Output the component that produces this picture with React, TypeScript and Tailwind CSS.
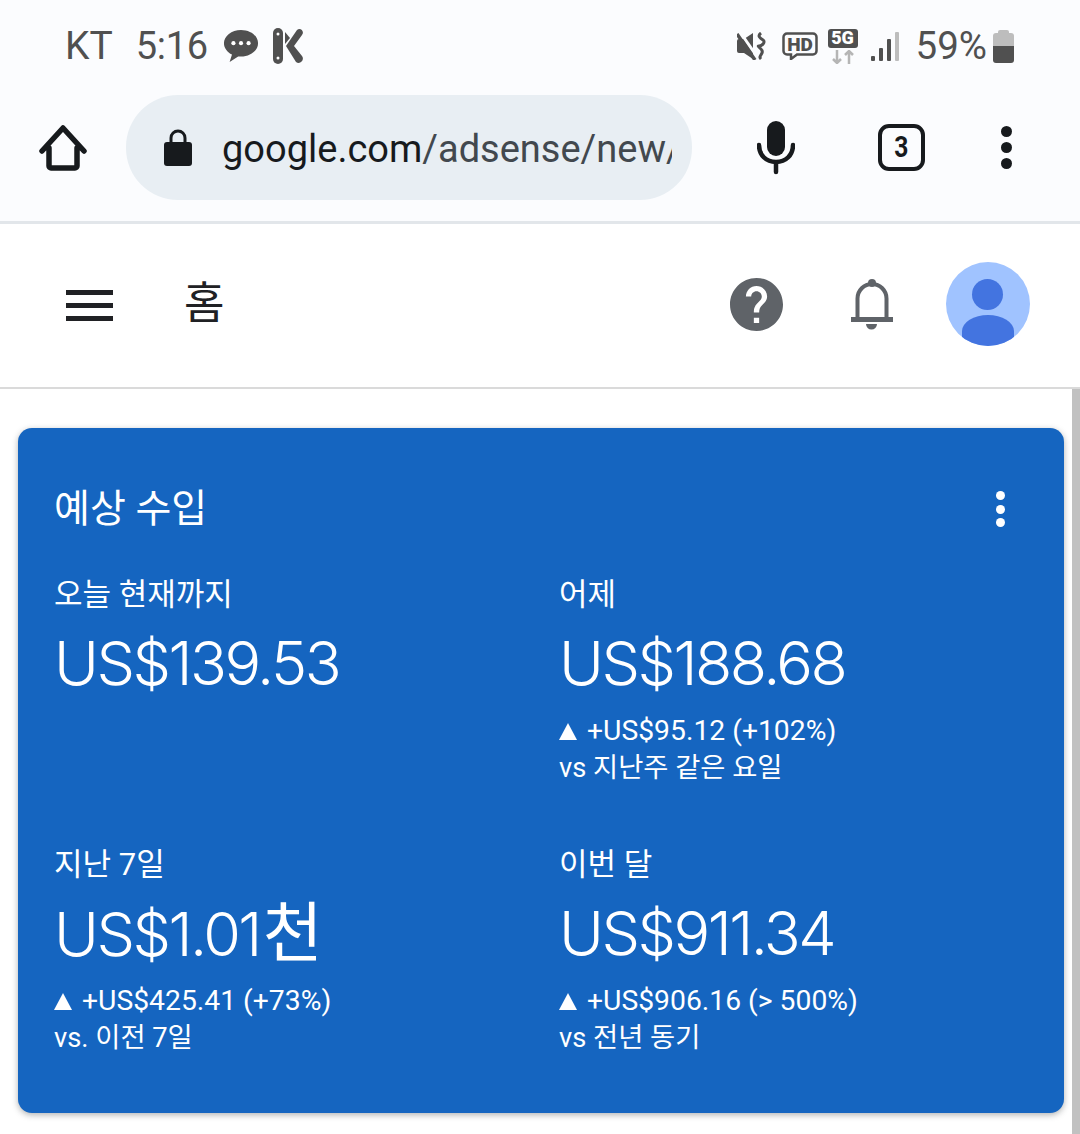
const ko = "font-['Roboto','Noto_Sans_CJK_KR',sans-serif]";

function Metric({ label, value, unit, delta, note }: { label: string; value: string; unit?: string; delta?: string; note?: string }) {
  return (
    <div className="flex flex-col">
      <div className="h-[38px] text-[31px] leading-[38px] text-white">{label}</div>
      <div className="mt-[18px] h-[62px] whitespace-nowrap font-['Inter','Noto_Sans_CJK_KR',sans-serif] text-[61px] font-[350] leading-[62px] tracking-[-2.5px] text-white">
        {value}
        {unit && <span className="ml-[3px] text-[65px] font-normal tracking-normal">{unit}</span>}
      </div>
      {delta && (
        <div className="mt-[19px] flex h-[36px] items-center text-[28.3px] leading-[36px] text-white">
          <svg width="18" height="17" viewBox="0 0 18 17" className="mr-[10px]"><path d="M9 0l9 17H0z" fill="#fff" /></svg>
          {delta}
        </div>
      )}
      {note && <div className="mt-[1px] h-[36px] text-[27.3px] leading-[36px] text-white">{note}</div>}
    </div>
  );
}

export default function App() {
  return (
    <div className={`flex h-[1134px] w-[1080px] flex-col overflow-hidden bg-white ${ko}`}>
      <div className="h-[224px] shrink-0 border-b-[3px] border-[#e2e6ea] bg-[#fbfcfe]">
        <div className="flex h-[95px] items-start justify-between pl-[65px] pr-[66px] pt-[27px]">
          <div className="flex h-[38px] items-center text-[#505050]">
            <span className="text-[39px] leading-none">KT</span>
            <span className="ml-[23px] text-[38px] leading-none tracking-[-0.3px]">5:16</span>
            <svg width="36" height="36" viewBox="0 0 38 36" className="ml-[15px]">
              <path d="M19 1C9 1 1 7.500 1 15c0 5 3.500 9.500 8.500 12L7 35l9-6c1 .1 2 .2 3 .2 10 0 18-6.300 18-14.200S29 1 19 1z" fill="#505050" />
              <circle cx="11" cy="15" r="2.200" fill="#fff" /><circle cx="19" cy="15" r="2.200" fill="#fff" /><circle cx="27" cy="15" r="2.200" fill="#fff" />
            </svg>
            <svg width="30" height="36" viewBox="0 0 30 36" className="ml-[14px]">
              <rect x="0" y="0" width="10" height="36" rx="5" fill="#505050" />
              <circle cx="5" cy="6" r="1.500" fill="#fff" /><circle cx="5" cy="30" r="1.500" fill="#fff" />
              <path d="M13 18L24 2c3-3 8 1 5 5l-8 11 8 10c3 4-2 9-6 6z" fill="#505050" />
              <path d="M12 4v12l5-6z" fill="#505050" />
            </svg>
          </div>
          <div className="flex h-[38px] items-center text-[#505050]">
            <svg width="30" height="28" viewBox="0 0 30 28">
              <path d="M0 9a2 2 0 0 1 2-2h5l9-6v26l-9-6H2a2 2 0 0 1-2-2z" fill="#505050" />
              <path d="M3 0l18 26" stroke="#fbfcfe" strokeWidth="3" />
              <path d="M0 2l18 26" stroke="#505050" strokeWidth="3.500" />
              <path d="M24 1c-4 3-1 5 2 7s-1 6-4 6 5 3 3 7-3 4-1 6" fill="none" stroke="#505050" strokeWidth="3" />
            </svg>
            <svg width="36" height="28" viewBox="0 0 36 28" className="ml-[15px]">
              <path d="M5 1.500h26a3.500 3.500 0 0 1 3.500 3.500v14a3.500 3.500 0 0 1-3.500 3.500H15l-6 4.500v-4.500H5A3.500 3.500 0 0 1 1.500 19V5A3.500 3.500 0 0 1 5 1.500z" fill="none" stroke="#505050" strokeWidth="2.500" />
              <text x="18" y="19" textAnchor="middle" fontFamily="Roboto" fontWeight="900" fontSize="19" fill="#505050">HD</text>
            </svg>
            <div className="ml-[10px] flex w-[30px] flex-col items-center gap-[2px]">
              <div className="flex h-[19px] w-[30px] items-center justify-center rounded-[3px] bg-[#505050] text-[18px] font-black leading-none text-white">5G</div>
              <svg width="24" height="14" viewBox="0 0 24 14"><path d="M6 0v13M2 9l4 4 4-4M18 14V1M14 5l4-4 4 4" fill="none" stroke="#b5b5b5" strokeWidth="2.500" /></svg>
            </div>
            <svg width="28" height="29" viewBox="0 0 28 29" className="ml-[13px]">
              <rect x="0" y="24" width="4" height="5" rx="1" fill="#505050" />
              <rect x="8" y="16" width="4" height="13" rx="1" fill="#505050" />
              <rect x="16" y="7" width="4" height="22" rx="1" fill="#505050" />
              <rect x="24" y="0" width="4" height="29" rx="1" fill="#bdbdbd" />
            </svg>
            <span className="ml-[17px] text-[38.500px] leading-none">59%</span>
            <div className="ml-[6px] flex h-[33px] w-[21px] flex-col items-center">
              <div className="h-[3px] w-[11px] rounded-t-[2px] bg-[#bdbdbd]" />
              <div className="flex w-full flex-1 flex-col overflow-hidden rounded-[3px]">
                <div className="h-[13px] bg-[#bdbdbd]" />
                <div className="flex-1 bg-[#505050]" />
              </div>
            </div>
          </div>
        </div>
        <div className="flex h-[105px] items-center">
          <svg width="48" height="48" viewBox="0 0 48 48" className="ml-[39px]">
            <path d="M3 27L24 4l21 23M10 24v18a2 2 0 0 0 2 2h24a2 2 0 0 0 2-2V24" fill="none" stroke="#171a1d" strokeWidth="5.500" strokeLinecap="round" strokeLinejoin="round" />
          </svg>
          <div className="ml-[39px] flex h-[105px] w-[566px] items-center overflow-hidden rounded-[52px] bg-[#e8eef3] pl-[38px]">
            <svg width="28" height="37" viewBox="0 0 28 37" className="shrink-0">
              <path d="M7 15V9a7 7 0 0 1 14 0v6" fill="none" stroke="#171a1d" strokeWidth="3" />
              <rect x="0" y="13" width="28" height="24" rx="3" fill="#171a1d" />
            </svg>
            <div className="ml-[30px] mt-[2px] w-[450px] overflow-hidden whitespace-nowrap text-[38px] leading-[46px] text-[#42484e]">
              <span className="text-[#171a1d]">google.com</span>/adsense/new/
            </div>
          </div>
          <svg width="38" height="54" viewBox="0 0 38 54" className="ml-[65px]">
            <rect x="10" y="0" width="18" height="35" rx="9" fill="#171a1d" />
            <path d="M2 24c0 10 7 17 17 17s17-7 17-17M19 41v10" fill="none" stroke="#171a1d" strokeWidth="4.500" strokeLinecap="round" />
          </svg>
          <div className="ml-[83px] flex h-[47px] w-[47px] items-center justify-center rounded-[11px] border-[4.500px] border-[#171a1d] text-[#171a1d]">
            <span className="scale-x-[0.85] text-[29px] font-bold leading-none">3</span>
          </div>
          <div className="ml-[76px] flex flex-col gap-[5px]">
            <div className="h-[11px] w-[11px] rounded-full bg-[#171a1d]" />
            <div className="h-[11px] w-[11px] rounded-full bg-[#171a1d]" />
            <div className="h-[11px] w-[11px] rounded-full bg-[#171a1d]" />
          </div>
        </div>
      </div>

      <div className="flex h-[165px] shrink-0 items-center border-b-[2px] border-[#dadada] bg-white pb-[3px]">
        <div className="ml-[66px] mt-[3px] flex w-[47px] flex-col gap-[7.500px]">
          <div className="h-[5.500px] bg-[#202124]" />
          <div className="h-[5.500px] bg-[#202124]" />
          <div className="h-[5.500px] bg-[#202124]" />
        </div>
        <span className="ml-[71px] text-[44px] leading-none text-[#202124]">홈</span>
        <div className="ml-auto flex items-center pr-[50px]">
          <svg width="53" height="53" viewBox="2 2 20 20">
            <path d="M12 2C6.480 2 2 6.480 2 12s4.480 10 10 10 10-4.480 10-10S17.520 2 12 2zm1 17h-2v-2h2v2zm2.070-7.750l-.9.920C13.450 12.900 13 13.500 13 15h-2v-.5c0-1.100.450-2.100 1.170-2.830l1.240-1.260c.370-.360.590-.860.590-1.410 0-1.100-.9-2-2-2s-2 .9-2 2H8c0-2.210 1.790-4 4-4s4 1.790 4 4c0 .880-.360 1.680-.930 2.250z" fill="#5f6368" />
          </svg>
          <svg width="42" height="52" viewBox="0 0 42 52" className="ml-[68px]">
            <path d="M6.500 41V20.500a14.500 14.500 0 0 1 29 0V41" fill="none" stroke="#5f6368" strokeWidth="4" />
            <circle cx="21" cy="5" r="4" fill="#5f6368" />
            <rect x="0" y="39" width="42" height="5" fill="#5f6368" />
            <path d="M15 46h11a5.500 5.500 0 0 1-11 0z" fill="#5f6368" />
          </svg>
          <div className="relative ml-[53px] h-[84px] w-[84px] overflow-hidden rounded-full bg-[#a0c3ff]">
            <div className="absolute left-[26px] top-[17px] h-[31px] w-[31px] rounded-full bg-[#4374e0]" />
            <div className="absolute left-[16px] top-[53px] h-[40px] w-[52px] rounded-t-[26px_16px] bg-[#4374e0]" />
          </div>
        </div>
      </div>

      <div className="flex flex-1 bg-white">
        <div className="flex-1 pl-[18px] pr-[8px] pt-[39px]">
          <div className="h-[685px] w-[1046px] rounded-[14px] bg-[#1565c0] pl-[36px] pt-[56px] shadow-[0_2px_6px_rgba(60,64,67,0.4)]">
            <div className="flex h-[50px] items-center justify-between pr-[59px]">
              <span className="text-[39px] leading-none text-white">예상 수입</span>
              <div className="flex flex-col gap-[4.500px]">
                <div className="h-[9px] w-[9px] rounded-full bg-white" />
                <div className="h-[9px] w-[9px] rounded-full bg-white" />
                <div className="h-[9px] w-[9px] rounded-full bg-white" />
              </div>
            </div>
            <div className="mt-[42px] grid grid-cols-[505px_1fr] grid-rows-[270px_auto]">
              <Metric label="오늘 현재까지" value="US$139.53" />
              <Metric label="어제" value="US$188.68" delta="+US$95.12 (+102%)" note="vs 지난주 같은 요일" />
              <Metric label="지난 7일" value="US$1.01" unit="천" delta="+US$425.41 (+73%)" note="vs. 이전 7일" />
              <Metric label="이번 달" value="US$911.34" delta="+US$906.16 (> 500%)" note="vs 전년 동기" />
            </div>
          </div>
        </div>
        <div className="w-[8px] bg-[#c1c1c1]" />
      </div>
    </div>
  );
}
